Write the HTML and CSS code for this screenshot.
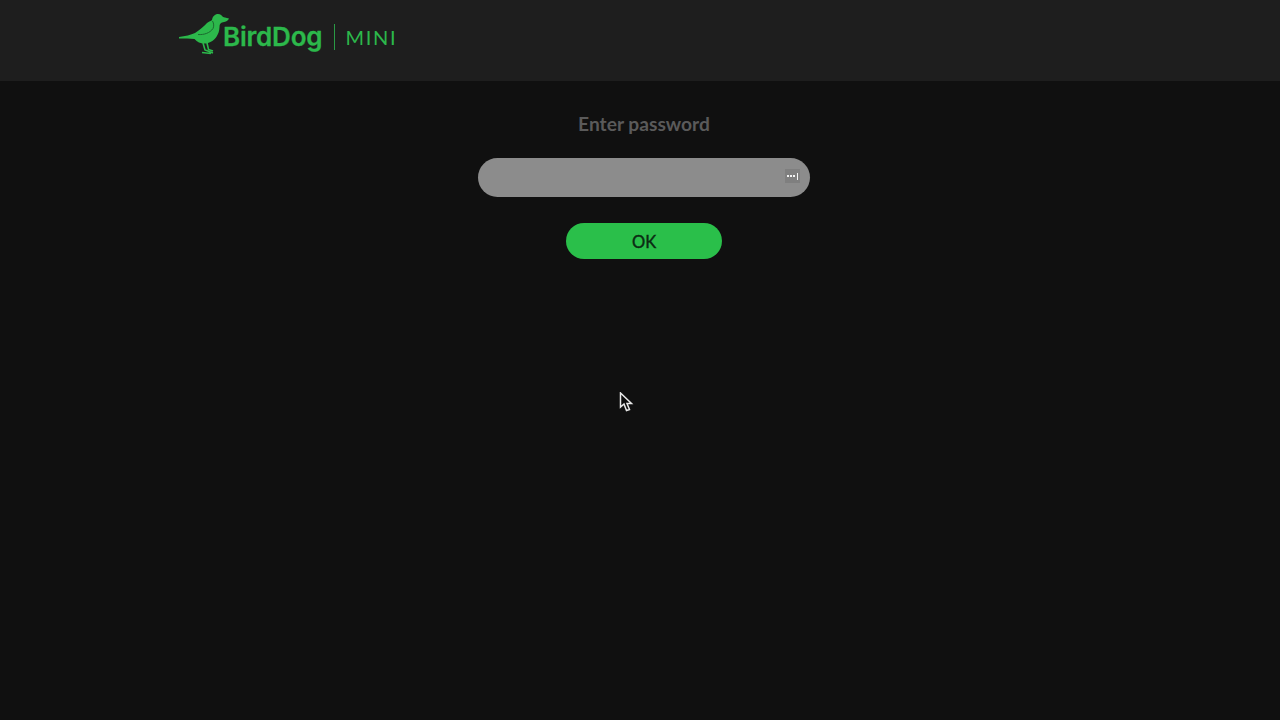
FILE: index.html
```html
<!DOCTYPE html>
<html lang="en">
<head>
<meta charset="utf-8">
<title>BirdDog MINI</title>
<link rel="stylesheet" href="styles.css">
</head>
<body>
<header class="topbar">
  <div class="logo">
    <svg class="bird" width="46" height="42" viewBox="0 0 46 42">
      <path class="bird-body" d="M1 24 C7 23 13 22 17 20 C22 17 26 13 29 10 C31 8.500 33 8 34 7 C34.500 3.500 37 1 40 1 C42.500 1 44 2.500 45 4 L51 5.500 C50.500 7.500 48 8.800 45 9.200 C42.500 9.800 41.500 11 41.500 14 C41.500 21 37 28 30 30 C25 31.500 20 30 16.500 26 C12 25 6 25.500 1 25.500 Z"/>
      <path class="bird-wing" d="M20 21.500 C26 22 32 20 35 15.500 C36 13.500 36 10.500 34.500 8"/>
      <path class="bird-legs" d="M25 30 L27 37 L35 40 M29 30 L30.500 36.500 L35 38 M24 39.500 L33 40.500"/>
    </svg>
    <span class="brand">BirdDog</span>
    <span class="divider"></span>
    <span class="model">MINI</span>
  </div>
</header>
<main class="content">
  <h1 class="title">Enter password</h1>
  <div class="field">
    <span class="key-icon"><i></i><i></i><i></i><b></b></span>
  </div>
  <button class="ok" type="button">OK</button>
</main>
<svg class="cursor" width="15" height="20" viewBox="0 0 15 20">
  <path d="M1.500 1 L1.500 15 L5 12 L7.500 18.500 L10.500 17.500 L8 11.500 L12.500 11.500 Z"/>
</svg>
</body>
</html>
```
FILE: styles.css
```css
* { box-sizing: border-box; }
html, body { margin: 0; height: 100%; }
body {
  background: #101010;
  font-family: "Lato", "Liberation Sans", sans-serif;
  overflow: hidden;
  position: relative;
}
.topbar {
  height: 81px;
  background: #1e1e1e;
  padding: 12px 0 0 178px;
}
.logo { display: flex; align-items: flex-start; height: 42px; }
.bird { flex: none; overflow: visible; margin-top: 1px; }
.bird-body { fill: #2cb84b; }
.bird-wing { fill: none; stroke: #1c6a2f; stroke-width: 1; }
.bird-legs { fill: none; stroke: #2cb84b; stroke-width: 1.600; }
.brand {
  margin: 7px 0 0 -1px;
  color: #2cb84b;
  font-family: "Inter", "Liberation Sans", sans-serif;
  font-size: 26px;
  line-height: 36px;
  font-weight: 600;
  letter-spacing: -0.200px;
  -webkit-text-stroke: 0.3px #2cb84b;
}
.divider {
  width: 1px;
  height: 26px;
  margin: 12px 10px 0 12px;
  background: #2a9a45;
}
.model {
  margin-top: 10px;
  color: #2cb84b;
  font-size: 20px;
  line-height: 30px;
  font-weight: 400;
  letter-spacing: 1.700px;
}
.content {
  display: flex;
  flex-direction: column;
  align-items: center;
  padding: 29px 0 0 8px;
}
.title {
  margin: 0;
  color: #5a5a5a;
  font-size: 19.200px;
  line-height: 28px;
  font-weight: 700;
}
.field {
  width: 332px;
  height: 39px;
  margin-top: 20px;
  padding: 11px 10px 0 0;
  border-radius: 20px;
  background: #8c8c8c;
  display: flex;
  justify-content: flex-end;
  align-items: flex-start;
}
.key-icon {
  width: 15px;
  height: 14px;
  background: #7f7f7f;
  display: flex;
  align-items: center;
  justify-content: center;
  gap: 1px;
}
.key-icon i { width: 2px; height: 2px; background: #f2f2f2; }
.key-icon b { width: 1px; height: 7px; margin-left: 1px; background: #f2f2f2; }
.ok {
  width: 156px;
  height: 36px;
  margin-top: 26px;
  border: 0;
  border-radius: 18px;
  background: #2abf4a;
  color: #0b2b13;
  font-family: "Lato", "Liberation Sans", sans-serif;
  font-size: 16.500px;
  font-weight: 400;
  -webkit-text-stroke: 0.4px #0b2b13;
  padding: 2px 0 0;
}
.cursor { position: absolute; left: 619px; top: 392px; }
.cursor path { fill: #0c0c0c; stroke: #e8e8e8; stroke-width: 1.500; }
```
